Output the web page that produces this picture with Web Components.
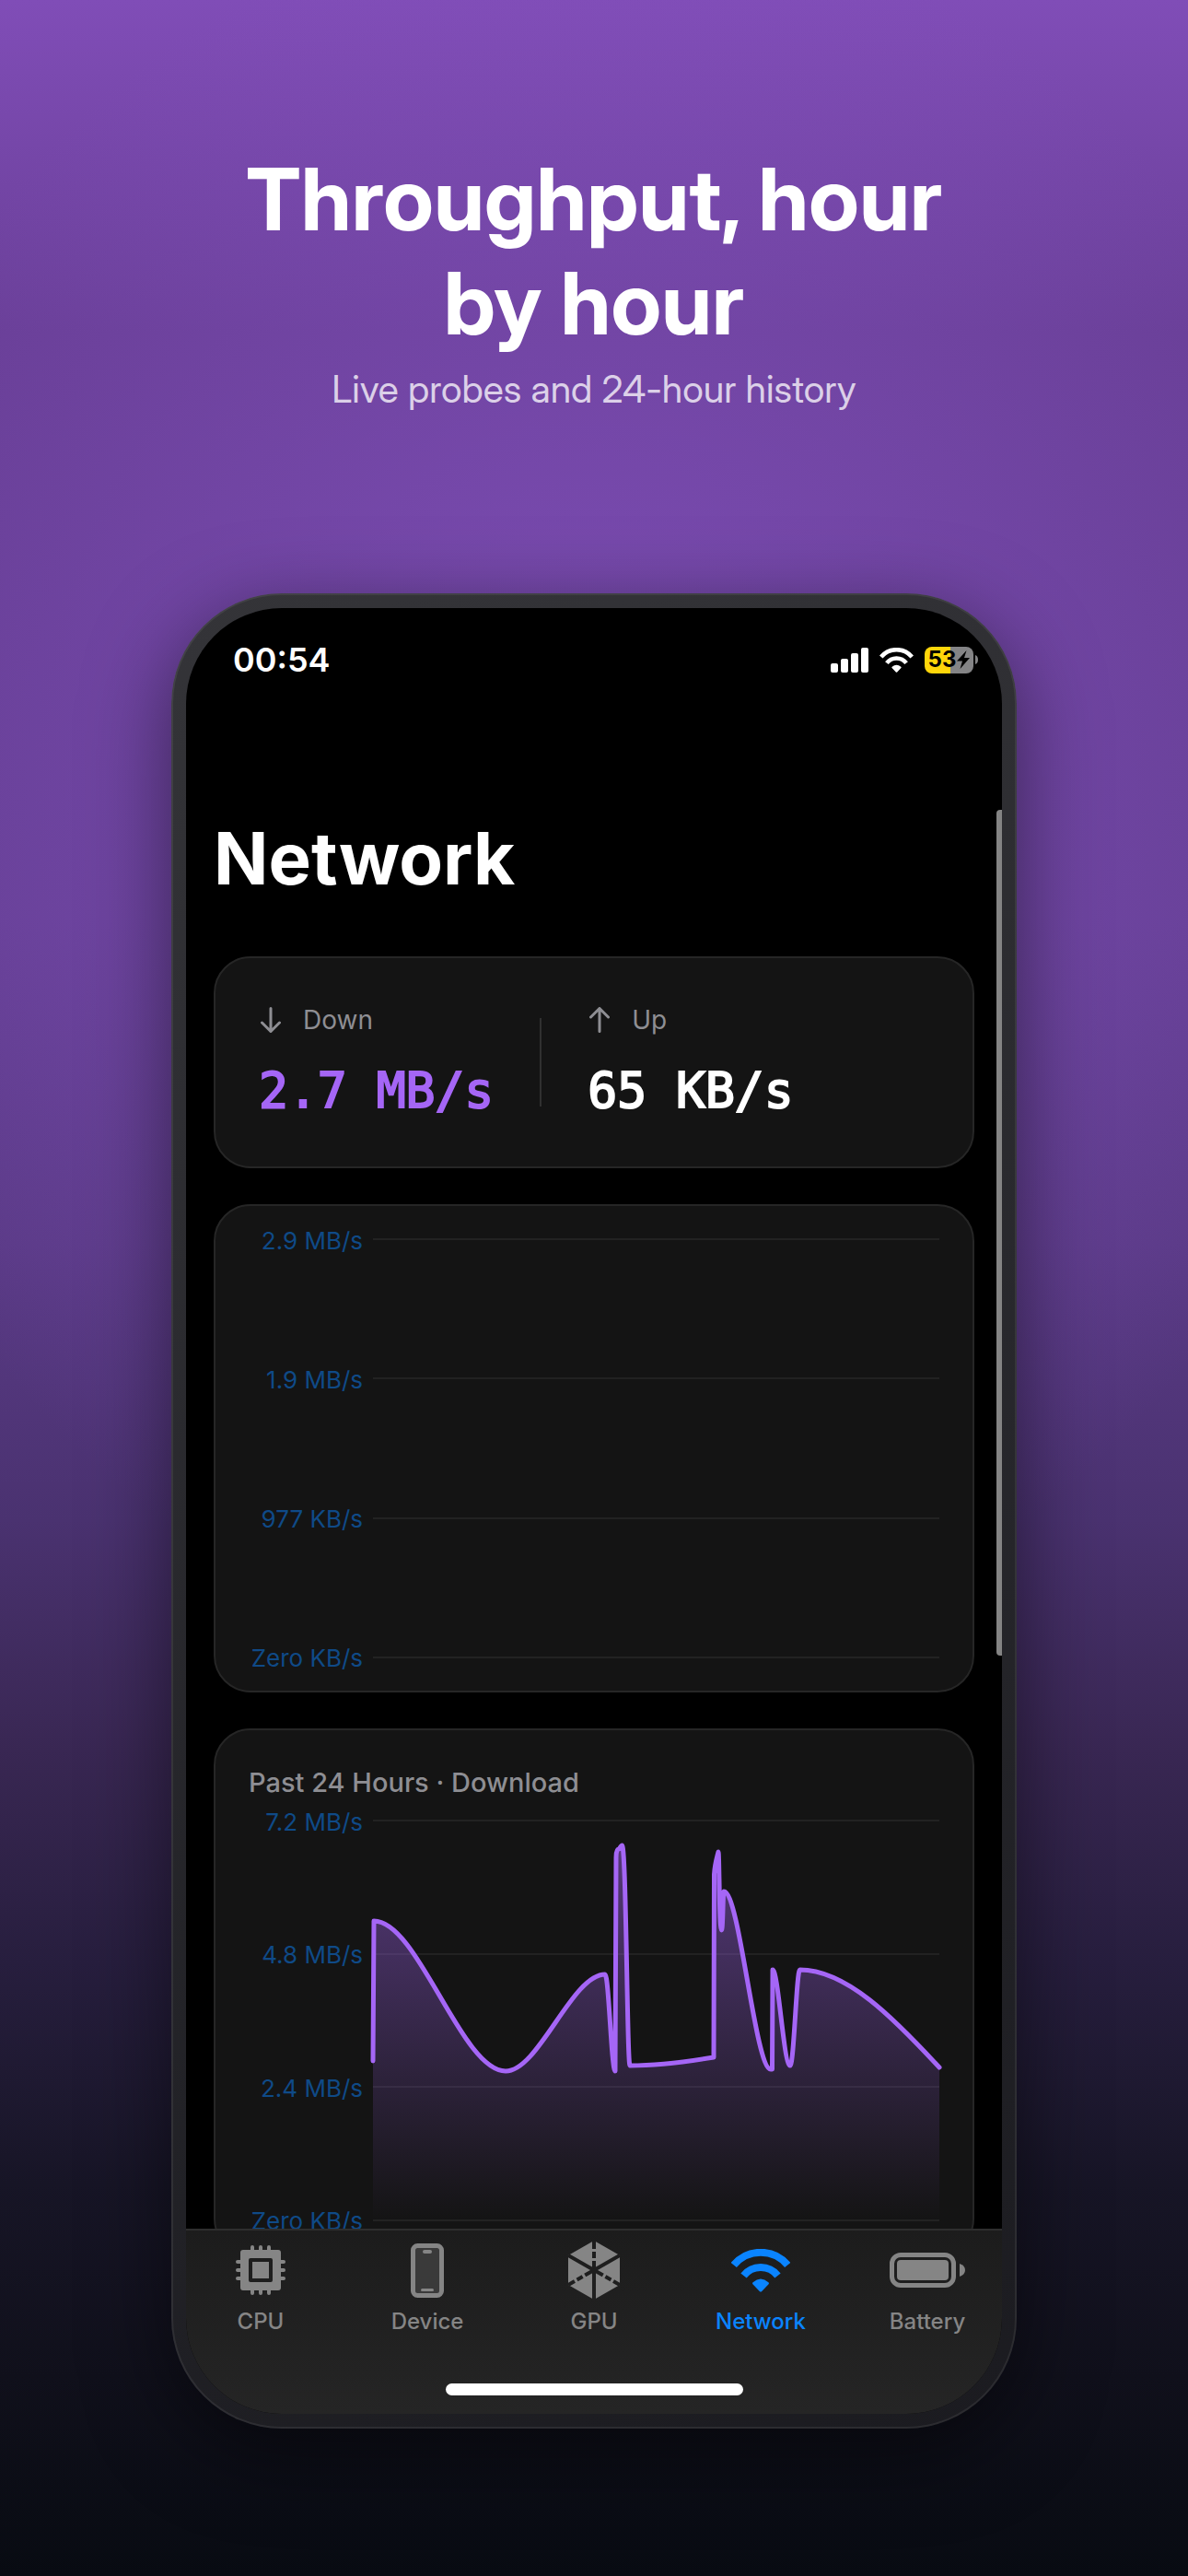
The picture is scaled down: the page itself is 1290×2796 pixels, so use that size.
<!DOCTYPE html>
<html lang="en">
<head>
<meta charset="utf-8">
<meta name="viewport" content="width=device-width, initial-scale=1">
<title>Throughput, hour by hour</title>
<style>
  html, body { margin: 0; }
  body {
    font-family: Inter, "Liberation Sans", sans-serif;
    color: #fff;
    background: #090b11;
    --card: #141414;
    --line: #262626;
    --muted: #8e8e93;
    --purple: #a566f6;
    --axis: #0f4a87;
    --tab: #858585;
    --blue: #0a84ff;
  }
</style>
</head>
<body>
<promo-page>
  <span slot="title">Throughput, hour by&nbsp;hour</span>
  <span slot="subtitle">Live probes and 24-hour history</span>
  <phone-frame>
    <status-bar slot="status" time="00:54" charge="53"></status-bar>
    <h2 slot="heading">Network</h2>
    <panel-card>
      <speed-pair>
        <speed-readout direction="down" label="Down" value="2.7 MB/s"></speed-readout>
        <speed-readout direction="up" label="Up" value="65 KB/s"></speed-readout>
      </speed-pair>
    </panel-card>
    <panel-card>
      <rate-chart ticks="2.9 MB/s|1.9 MB/s|977 KB/s|Zero KB/s" style="--plot: 486px"></rate-chart>
    </panel-card>
    <panel-card heading="Past 24 Hours · Download">
      <rate-chart ticks="7.2 MB/s|4.8 MB/s|2.4 MB/s|Zero KB/s" style="--plot: 466px"
        line="M0 261L1 109C49 109 96 272 144 272C180 272 216 167 252 167C256 167 259 272 263 272L264 40C264 32 266 31 267 31C268 31 269 27 270.5 27C275 27 276 266 279 266C309 266 340 262 370 257L370.5 59C371 48 373 42 375 34C376 34 376 119 378.5 119C380 119 380 77 381 77C398 77 415 270 432 270L433.5 270L434 162C440 162 446 266 453 266C457 266 460 162 463.5 162C514 162 565 214 615 268"></rate-chart>
    </panel-card>
    <tab-bar slot="tabs">
      <tab-item icon="cpu">CPU</tab-item>
      <tab-item icon="device">Device</tab-item>
      <tab-item icon="gpu">GPU</tab-item>
      <tab-item icon="wifi" active>Network</tab-item>
      <tab-item icon="battery">Battery</tab-item>
    </tab-bar>
  </phone-frame>
</promo-page>

<script>
const wifi = `<path d="M2.8 17.5A38 38 0 0 1 61.2 17.5M13.5 29A23.5 23.5 0 0 1 50.5 29" fill="none" stroke="currentColor" stroke-width="8"/><path d="M23.4 38.2Q22.6 37 23.6 36.2Q32 29 40.4 36.2Q41.4 37 40.6 38.2L33.2 46Q32 47.2 30.8 46Z" fill="currentColor"/>`;

const icons = {
  cpu: `<svg width="54" height="54" viewBox="0 0 54 54" aria-hidden="true"><path d="M18 2V52M27 2V52M36 2V52M2 18H52M2 27H52M2 36H52" stroke="currentColor" stroke-width="4" stroke-linecap="round" stroke-dasharray="5 40 5"/><path fill="currentColor" fill-rule="evenodd" d="M8 5H46Q49 5 49 8V46Q49 49 46 49H8Q5 49 5 46V8Q5 5 8 5ZM16 14Q14 14 14 16V38Q14 40 16 40H38Q40 40 40 38V16Q40 14 38 14ZM18 18H36V36H18Z"/></svg>`,
  device: `<svg width="36" height="59" viewBox="0 0 36 59" aria-hidden="true"><rect x="2.5" y="2.5" width="31" height="54" rx="5" fill="#3a3a3a" stroke="currentColor" stroke-width="5"/><rect x="13" y="7" width="10" height="4" rx="2" fill="currentColor"/><rect x="11" y="49" width="14" height="3" rx="1.5" fill="currentColor"/></svg>`,
  gpu: `<svg width="56" height="62" viewBox="0 0 56 62" aria-hidden="true"><mask id="cut"><rect width="56" height="62" fill="#fff"/><path d="M28 31L0 15M28 31L56 15M28 31V62" stroke="#000" stroke-width="4"/><path d="M28 0V31M0 47L28 31M56 47L28 31" stroke="#000" stroke-width="4" stroke-dasharray="8 3 7 3 12"/></mask><path mask="url(#cut)" fill="currentColor" d="M28 -1L56 15V47L28 63L0 47V15Z"/></svg>`,
  wifi: `<svg width="64" height="47" viewBox="0 0 64 47" aria-hidden="true">${wifi}</svg>`,
  battery: `<svg width="82" height="38" viewBox="0 0 82 38" aria-hidden="true"><rect x="2.5" y="2.5" width="67" height="33" rx="9.5" fill="none" stroke="currentColor" stroke-width="5"/><rect x="8" y="8" width="56" height="22" rx="4" fill="currentColor"/><path d="M76 12Q82 14 82 19T76 26Z" fill="currentColor"/></svg>`,
  down: `<svg width="22" height="28" viewBox="0 0 22 28" aria-hidden="true"><path d="M11 1.5V26.5M1.5 17L11 26.5L20.5 17" fill="none" stroke="currentColor" stroke-width="3" stroke-linecap="round" stroke-linejoin="round"/></svg>`,
  up: `<svg width="22" height="28" viewBox="0 0 22 28" aria-hidden="true"><path d="M11 26.5V1.5M1.5 11L11 1.5L20.5 11" fill="none" stroke="currentColor" stroke-width="3" stroke-linecap="round" stroke-linejoin="round"/></svg>`
};

const define = (name, render) => customElements.define(name, class extends HTMLElement {
  constructor() {
    super();
    this.attachShadow({ mode: "open" }).innerHTML =
      `<style>*{box-sizing:border-box}</style>` + render(this);
  }
});

define("promo-page", () => `
  <style>
    :host {
      display: flex; flex-direction: column; box-sizing: border-box;
      height: 100vh; padding: 160px 186px; gap: 197px;
      background:
        radial-gradient(ellipse 860px 960px at 50% 850px, rgba(138,86,200,.6), rgba(134,84,194,0)),
        linear-gradient(180deg, #804db7 0, #693f97 360px, #653f94 1000px, #5a3a86 1350px, #4a3270 1650px, #392753 1900px, #271e3e 2130px, #171526 2370px, #10101b 2580px, #080b12 2796px);
    }
    header { display: flex; flex-direction: column; gap: 11px; text-align: center; font-family: "Inter Display", Inter, sans-serif; font-variation-settings: "opsz" 32; }
    h1 { margin: 0; font-size: 94px; line-height: 113px; font-weight: 700; }
    p { margin: 0; font-size: 41px; line-height: 50px; color: rgba(255,255,255,.76); }
  </style>
  <header><h1><slot name="title"></slot></h1><p><slot name="subtitle"></slot></p></header>
  <slot></slot>`);

define("phone-frame", () => `
  <style>
    :host {
      display: flex; flex: 1; min-height: 0; box-sizing: border-box;
      padding: 14px; border: 2px solid rgba(255,255,255,.07); border-radius: 120px;
      background: linear-gradient(160deg, #343438, #1b1b20) border-box;
      box-shadow: 0 24px 90px rgba(0,0,0,.5);
    }
    .screen { flex: 1; min-width: 0; display: flex; flex-direction: column; overflow: hidden; position: relative; border-radius: 104px; background: #000; }
    main { flex: 1; min-height: 0; overflow: hidden; display: flex; flex-direction: column; gap: 39px; padding: 112px 30px 0; }
    ::slotted(h2) { margin: 0 0 19px; font-size: 78px; line-height: 96px; font-weight: 700; }
    .thumb { position: absolute; right: 0; top: 219px; width: 6px; height: 918px; border-radius: 4px 0 0 4px; background: #848484; }
  </style>
  <div class="screen">
    <slot name="status"></slot>
    <main><slot name="heading"></slot><slot></slot></main>
    <slot name="tabs"></slot>
    <div class="thumb"></div>
  </div>`);

define("status-bar", el => `
  <style>
    :host { display: flex; flex: none; justify-content: space-between; align-items: center; height: 112px; padding: 0 26px 0 51px; box-sizing: border-box; }
    time { font-size: 36px; line-height: 44px; font-weight: 600; }
    .icons { display: flex; align-items: center; gap: 12px; }
    .battery { display: flex; align-items: center; gap: 2px; }
    .cell { display: flex; align-items: center; justify-content: center; gap: 1px; width: 53px; height: 29px; border-radius: 8px; color: #000; background: linear-gradient(90deg, #ffd60a 53%, #848486 53%); font-size: 24px; line-height: 28px; font-weight: 700; }
  </style>
  <time>${el.getAttribute("time")}</time>
  <div class="icons">
    <svg width="41" height="27" viewBox="0 0 41 27" fill="#fff" aria-hidden="true"><rect y="17" width="8" height="10" rx="2"/><rect x="11" y="12" width="8" height="15" rx="2"/><rect x="22" y="6" width="8" height="21" rx="2"/><rect x="33" width="8" height="27" rx="2"/></svg>
    <svg width="37" height="27" viewBox="0 0 64 47" aria-hidden="true">${wifi}</svg>
    <div class="battery">
      <div class="cell"><span>${el.getAttribute("charge")}</span><svg width="14" height="20" viewBox="0 0 14 20" aria-hidden="true"><path d="M10.5 0L0 11.5H6L3.5 20L14 8H8Z" fill="#000"/></svg></div>
      <svg width="3" height="10" viewBox="0 0 3 10" aria-hidden="true"><path d="M0 0Q3 1 3 5T0 10Z" fill="#848486"/></svg>
    </div>
  </div>`);

define("panel-card", el => {
  const heading = el.getAttribute("heading");
  return `
  <style>
    :host { display: flex; flex-direction: column; flex: none; gap: 8px; box-sizing: border-box; padding: ${heading ? 40 : 20}px 36px 20px; border: 2px solid var(--line); border-radius: 40px; background: var(--card); }
    h3 { margin: 0; font-size: 29px; line-height: 34px; font-weight: 500; color: var(--muted); }
  </style>
  ${heading ? `<h3>${heading}</h3>` : ""}<slot></slot>`;
});

define("speed-pair", () => `
  <style>
    :host { display: flex; gap: 50px; padding: 30px 11px; height: 126px; }
    .rule { width: 2px; margin: 15px 0; background: #303030; }
  </style>
  <slot name="down"></slot><div class="rule"></div><slot name="up"></slot>`);

define("speed-readout", el => {
  const dir = el.getAttribute("direction");
  el.slot = dir;
  return `
  <style>
    :host { display: flex; flex-direction: column; gap: 30px; }
    .label { display: flex; align-items: center; gap: 24px; padding-left: 2px; font-size: 28px; line-height: 34px; color: var(--muted); }
    .value { font-family: "DejaVu Sans Mono", monospace; font-size: 53px; line-height: 60px; -webkit-text-stroke: 2px; color: ${dir === "down" ? "var(--purple)" : "#fff"}; white-space: pre; }
  </style>
  <div class="label">${icons[dir]}<span>${el.getAttribute("label")}</span></div>
  <div class="value">${el.getAttribute("value")}</div>`;
});

define("rate-chart", el => {
  const ticks = el.getAttribute("ticks").split("|");
  const line = el.getAttribute("line");
  return `
  <style>
    :host { display: grid; height: var(--plot); }
    .ticks, svg { grid-area: 1 / 1; min-width: 0; }
    .ticks { display: flex; flex-direction: column; justify-content: space-between; }
    .tick { display: flex; align-items: center; gap: 11px; height: 32px; }
    .tick span { flex: none; width: 124px; padding-top: 3px; text-align: right; font-size: 26px; line-height: 32px; color: var(--axis); white-space: nowrap; }
    .tick i { flex: 1; height: 2px; background: #222; }
    svg { margin: 16px 0 16px 135px; width: calc(100% - 135px); height: calc(100% - 32px); overflow: visible; }
  </style>
  <div class="ticks">${ticks.map(t => `<div class="tick"><span>${t}</span><i></i></div>`).join("")}</div>
  ${line ? `<svg viewBox="0 0 615 434" preserveAspectRatio="none" role="img" aria-label="Download rate">
    <linearGradient id="fade" gradientUnits="userSpaceOnUse" x1="0" y1="27" x2="0" y2="434"><stop stop-color="#a566f6" stop-opacity=".45"/><stop offset="1" stop-color="#a566f6" stop-opacity="0"/></linearGradient>
    <path d="${line}V434H0Z" fill="url(#fade)"/>
    <path d="${line}" fill="none" stroke="#a566f6" stroke-width="5" stroke-linecap="round" stroke-linejoin="round"/>
  </svg>` : ""}`;
});

define("tab-bar", () => `
  <style>
    :host { display: flex; flex: none; flex-direction: column; align-items: center; gap: 53px; padding: 12px 0 20px; border-top: 2px solid #2e2e2e; background: linear-gradient(180deg, #1c1c1c, #252525); }
    nav { display: flex; justify-content: space-between; width: 100%; }
    .home { width: 323px; height: 13px; border-radius: 7px; background: #fff; }
  </style>
  <nav><slot></slot></nav><div class="home"></div>`);

define("tab-item", el => `
  <style>
    :host { display: block; width: 162px; }
    a { display: flex; flex-direction: column; align-items: center; gap: 11px; color: ${el.hasAttribute("active") ? "var(--blue)" : "var(--tab)"}; text-decoration: none; font-size: 24px; line-height: 28px; font-weight: 500; }
    .icon { display: flex; align-items: center; height: 62px; }
  </style>
  <a href="#${el.getAttribute("icon")}"${el.hasAttribute("active") ? ' aria-current="page"' : ""}><span class="icon">${icons[el.getAttribute("icon")]}</span><slot></slot></a>`);
</script>
</body>
</html>
